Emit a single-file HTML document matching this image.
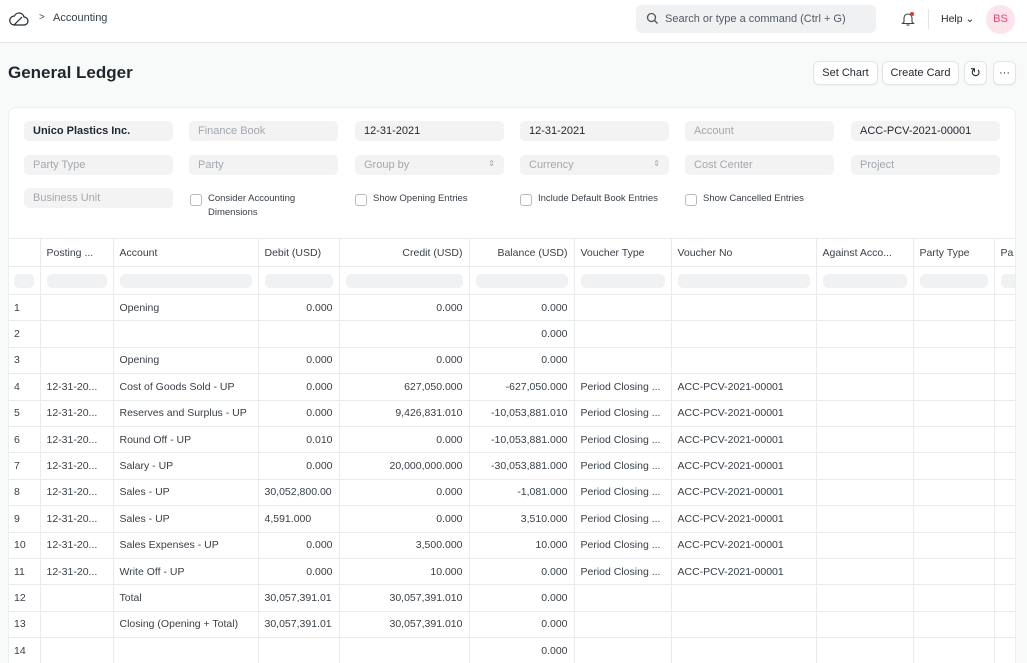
<!DOCTYPE html>
<html style="overflow:hidden;width:1027px;height:663px"><head><meta charset="utf-8"><style>
*{box-sizing:border-box;margin:0;padding:0}
body{width:1027px;height:663px;overflow:hidden;background:#f8f9f9;font-family:"Liberation Sans",sans-serif;color:#1f272e;position:relative}
.top{position:absolute;left:0;top:0;width:1027px;height:43px;background:#fff;border-bottom:1px solid #e5e7ea}
.abs{position:absolute}
.search{left:636px;top:5px;width:240px;height:28px;background:#f0f1f3;border-radius:6px;font-size:11px;color:#525a63;padding:8px 0 0 29px}
.btn{position:absolute;top:61px;height:24px;background:#fff;border:1px solid #e2e4e7;border-radius:6px;font-size:11px;text-align:center;line-height:22px;box-shadow:0 1px 1px rgba(0,0,0,.04)}
.card{position:absolute;left:8px;top:107px;width:1008px;height:556px;background:#fff;border:1px solid #eceef0;border-bottom:none;border-radius:8px 8px 0 0;overflow:hidden}
.inp{position:absolute;width:149px;height:20px;background:#f3f3f4;border-radius:5px;font-size:11px;padding:4px 0 0 9px;color:#a2a8ae}
.inp.v{color:#1f272e}
.chk{position:absolute;font-size:9.5px;color:#383f46;line-height:14px;padding-left:18px}
.chk:before{content:"";position:absolute;left:0;top:2px;width:10px;height:10px;border:1px solid #b5bac0;border-radius:3px}
table{position:absolute;left:-1px;top:130px;width:1040px;border-collapse:collapse;table-layout:fixed;font-size:10.5px;color:#383f46}
td{border-right:1px solid #e8eaed;border-bottom:1px solid #e8eaed;height:26.4px;padding:0 6px;white-space:nowrap;overflow:hidden;text-overflow:clip}
tr.h td{height:28px;border-top:1px solid #e8eaed}
tr.f td{height:28px}
.pl{display:block;height:14px;background:#f0f1f3;border-radius:5px}
.r{text-align:right}
</style></head><body>
<div class="top">
<svg class="abs" style="left:9px;top:11px" width="20" height="16" viewBox="0 0 20 16" fill="none" stroke="#1f272e" stroke-width="1.2"><path d="M5 14h10a4 4 0 0 0 0-8 5 5 0 0 0-9.5-1A4.5 4.5 0 0 0 5 14z"/><path d="M5 14 13 6"/></svg>
<div class="abs" style="left:39px;top:12px;font-size:10px;color:#555">&gt;</div>
<div class="abs" style="left:53px;top:12px;font-size:11px;color:#383f46">Accounting</div>
<div class="abs search">Search or type a command (Ctrl + G)</div>
<svg class="abs" style="left:646px;top:12px" width="13" height="13" viewBox="0 0 13 13" fill="none" stroke="#555" stroke-width="1.3"><circle cx="5.5" cy="5.5" r="4"/><path d="M8.5 8.5l3 3"/></svg>
<svg class="abs" style="left:901px;top:11px" width="14" height="16" viewBox="0 0 14 16" fill="none" stroke="#444" stroke-width="1.1"><path d="M3 11V7a4 4 0 0 1 8 0v4l1.5 1.5h-11z"/><path d="M5.5 14h3"/></svg>
<div class="abs" style="left:910px;top:12px;width:4px;height:4px;border-radius:2px;background:#e03636"></div>
<div class="abs" style="left:928px;top:9px;width:1px;height:20px;background:#e2e4e7"></div>
<div class="abs" style="left:941px;top:13px;font-size:10.5px">Help ⌄</div>
<div class="abs" style="left:986px;top:5px;width:29px;height:29px;border-radius:50%;background:#fde4ea;color:#e8457b;font-size:11px;text-align:center;line-height:29px">BS</div>
</div>
<div class="abs" style="left:8px;top:63px;font-size:17px;font-weight:bold">General Ledger</div>
<div class="btn" style="left:813px;width:65px">Set Chart</div>
<div class="btn" style="left:882px;width:77px">Create Card</div>
<div class="btn" style="left:964px;width:23px;font-size:13px">↻</div>
<div class="btn" style="left:993px;width:23px">···</div>
<div class="card">
<div class="inp v" style="left:15px;top:13px;font-weight:bold;color:#1f272e">Unico Plastics Inc.</div>
<div class="inp" style="left:180px;top:13px">Finance Book</div>
<div class="inp v" style="left:346px;top:13px">12-31-2021</div>
<div class="inp v" style="left:511px;top:13px">12-31-2021</div>
<div class="inp" style="left:676px;top:13px">Account</div>
<div class="inp v" style="left:842px;top:13px">ACC-PCV-2021-00001</div>
<div class="inp" style="left:15px;top:47px">Party Type</div>
<div class="inp" style="left:180px;top:47px">Party</div>
<div class="inp" style="left:346px;top:47px">Group by<span style="float:right;margin-right:9px;font-size:8px">⇕</span></div>
<div class="inp" style="left:511px;top:47px">Currency<span style="float:right;margin-right:9px;font-size:8px">⇕</span></div>
<div class="inp" style="left:676px;top:47px">Cost Center</div>
<div class="inp" style="left:842px;top:47px">Project</div>
<div class="inp" style="left:15px;top:80px">Business Unit</div>
<div class="chk" style="left:181px;top:84px">Consider Accounting<br>Dimensions</div>
<div class="chk" style="left:346px;top:84px">Show Opening Entries</div>
<div class="chk" style="left:511px;top:84px">Include Default Book Entries</div>
<div class="chk" style="left:676px;top:84px">Show Cancelled Entries</div>
<table>
<colgroup><col style="width:32px"><col style="width:73px"><col style="width:145px"><col style="width:81px"><col style="width:130px"><col style="width:105px"><col style="width:97px"><col style="width:145px"><col style="width:97px"><col style="width:81px"><col style="width:54px"></colgroup>
<tr class="h"><td></td><td>Posting ...</td><td>Account</td><td>Debit (USD)</td><td class="r">Credit (USD)</td><td class="r">Balance (USD)</td><td>Voucher Type</td><td>Voucher No</td><td>Against Acco...</td><td>Party Type</td><td>Pa</td></tr>
<tr class="f"><td><span class="pl"></span></td><td><span class="pl"></span></td><td><span class="pl"></span></td><td><span class="pl"></span></td><td><span class="pl"></span></td><td><span class="pl"></span></td><td><span class="pl"></span></td><td><span class="pl"></span></td><td><span class="pl"></span></td><td><span class="pl"></span></td><td><span class="pl"></span></td></tr>
<tr><td>1</td><td></td><td>Opening</td><td class="r">0.000</td><td class="r">0.000</td><td class="r">0.000</td><td></td><td></td><td></td><td></td><td></td></tr>
<tr><td>2</td><td></td><td></td><td></td><td></td><td class="r">0.000</td><td></td><td></td><td></td><td></td><td></td></tr>
<tr><td>3</td><td></td><td>Opening</td><td class="r">0.000</td><td class="r">0.000</td><td class="r">0.000</td><td></td><td></td><td></td><td></td><td></td></tr>
<tr><td>4</td><td>12-31-20...</td><td>Cost of Goods Sold - UP</td><td class="r">0.000</td><td class="r">627,050.000</td><td class="r">-627,050.000</td><td>Period Closing ...</td><td>ACC-PCV-2021-00001</td><td></td><td></td><td></td></tr>
<tr><td>5</td><td>12-31-20...</td><td>Reserves and Surplus - UP</td><td class="r">0.000</td><td class="r">9,426,831.010</td><td class="r">-10,053,881.010</td><td>Period Closing ...</td><td>ACC-PCV-2021-00001</td><td></td><td></td><td></td></tr>
<tr><td>6</td><td>12-31-20...</td><td>Round Off - UP</td><td class="r">0.010</td><td class="r">0.000</td><td class="r">-10,053,881.000</td><td>Period Closing ...</td><td>ACC-PCV-2021-00001</td><td></td><td></td><td></td></tr>
<tr><td>7</td><td>12-31-20...</td><td>Salary - UP</td><td class="r">0.000</td><td class="r">20,000,000.000</td><td class="r">-30,053,881.000</td><td>Period Closing ...</td><td>ACC-PCV-2021-00001</td><td></td><td></td><td></td></tr>
<tr><td>8</td><td>12-31-20...</td><td>Sales - UP</td><td>30,052,800.00</td><td class="r">0.000</td><td class="r">-1,081.000</td><td>Period Closing ...</td><td>ACC-PCV-2021-00001</td><td></td><td></td><td></td></tr>
<tr><td>9</td><td>12-31-20...</td><td>Sales - UP</td><td>4,591.000</td><td class="r">0.000</td><td class="r">3,510.000</td><td>Period Closing ...</td><td>ACC-PCV-2021-00001</td><td></td><td></td><td></td></tr>
<tr><td>10</td><td>12-31-20...</td><td>Sales Expenses - UP</td><td class="r">0.000</td><td class="r">3,500.000</td><td class="r">10.000</td><td>Period Closing ...</td><td>ACC-PCV-2021-00001</td><td></td><td></td><td></td></tr>
<tr><td>11</td><td>12-31-20...</td><td>Write Off - UP</td><td class="r">0.000</td><td class="r">10.000</td><td class="r">0.000</td><td>Period Closing ...</td><td>ACC-PCV-2021-00001</td><td></td><td></td><td></td></tr>
<tr><td>12</td><td></td><td>Total</td><td>30,057,391.01</td><td class="r">30,057,391.010</td><td class="r">0.000</td><td></td><td></td><td></td><td></td><td></td></tr>
<tr><td>13</td><td></td><td>Closing (Opening + Total)</td><td>30,057,391.01</td><td class="r">30,057,391.010</td><td class="r">0.000</td><td></td><td></td><td></td><td></td><td></td></tr>
<tr><td>14</td><td></td><td></td><td></td><td></td><td class="r">0.000</td><td></td><td></td><td></td><td></td><td></td></tr>
<tr><td></td><td></td><td></td><td></td><td></td><td></td><td></td><td></td><td></td><td></td><td></td></tr>
</table>
</div>
</body></html>
